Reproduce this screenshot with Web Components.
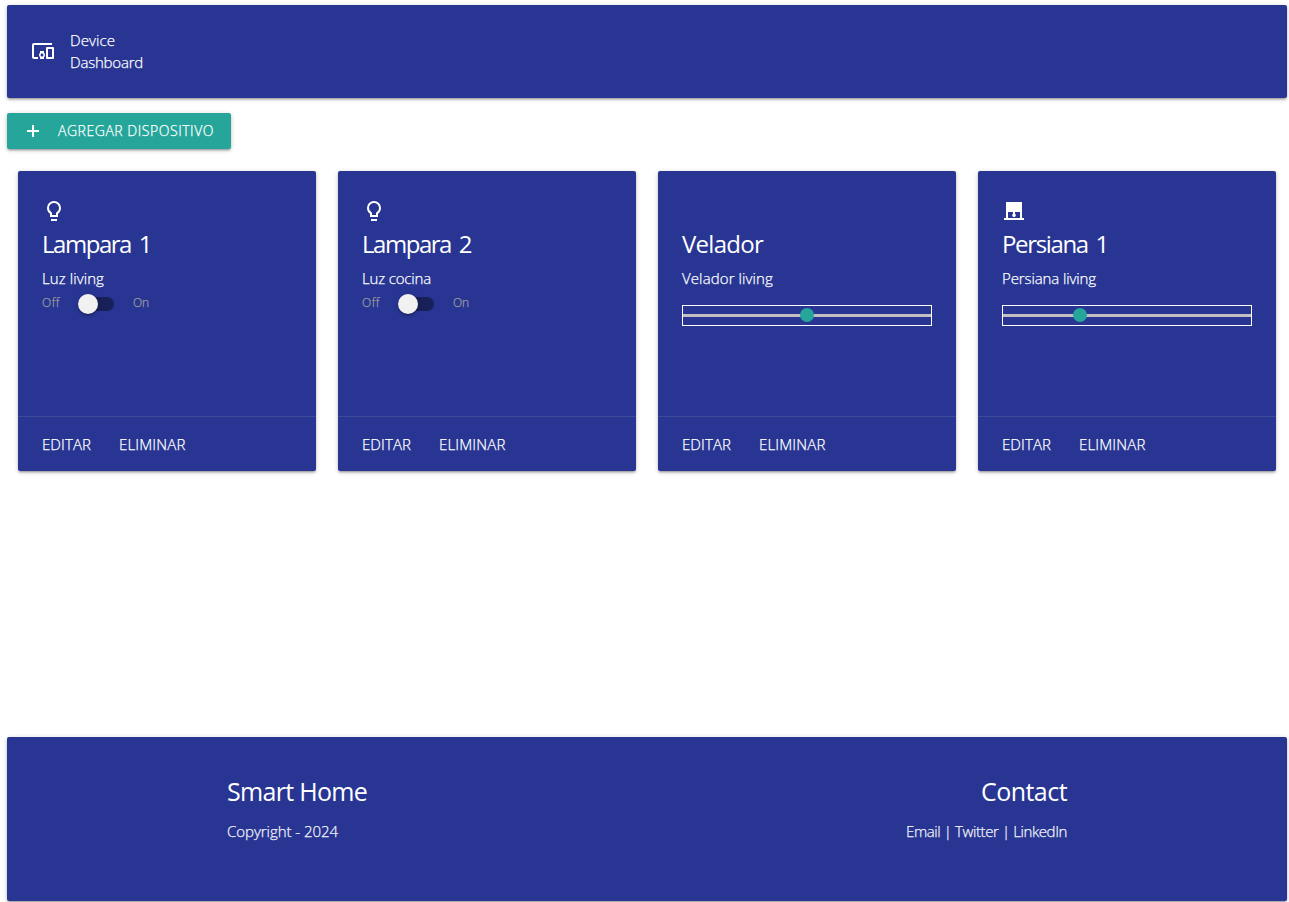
<!DOCTYPE html>
<html lang="es">
<head>
<meta charset="utf-8">
<title>Device Dashboard</title>
<style>
html,body{margin:0;background:#fff;height:100%}
body{font-family:"Open Sans","Noto Sans",sans-serif;font-size:15px;line-height:22px;color:#fff;overflow:hidden}
</style>
</head>
<body>
<smart-app></smart-app>
<script>
const SHADOW='0 2px 2px 0 rgba(0,0,0,.14),0 3px 1px -2px rgba(0,0,0,.12),0 1px 5px 0 rgba(0,0,0,.2)';
const LIGHT='font-weight:300;-webkit-text-stroke:.25px currentColor';
const define=(name,html,setup)=>customElements.define(name,class extends HTMLElement{
  constructor(){super();this.attachShadow({mode:'open'}).innerHTML=html;}
  connectedCallback(){if(setup)setup(this,this.shadowRoot);}
});

// A line of text tracked so that it fills the given width
define('fit-text',`<style>:host{display:block;white-space:pre}span{display:inline-block}</style><span><slot></slot></span>`,(el,root)=>{
  const span=root.querySelector('span'),target=+el.getAttribute('width');
  el.style.width=target+'px';
  const n=el.textContent.length;
  span.style.letterSpacing='0px';
  const w=span.getBoundingClientRect().width;
  span.style.letterSpacing=((target-w)/n).toFixed(3)+'px';
});

const ICONS={
  devices:'<path d="M3 6h18V4H3c-1.1 0-2 .9-2 2v12c0 1.1.9 2 2 2h4v-2H3V6zm10 6H9v1.78c-.61.55-1 1.33-1 2.22s.39 1.67 1 2.22V20h4v-1.78c.61-.55 1-1.34 1-2.22s-.39-1.67-1-2.22V12zm-2 5.5c-.83 0-1.5-.67-1.5-1.5s.67-1.5 1.5-1.5 1.5.67 1.5 1.5-.67 1.5-1.5 1.5zM22 8h-6c-.5 0-1 .5-1 1v10c0 .5.5 1 1 1h6c.5 0 1-.5 1-1V9c0-.5-.5-1-1-1zm-1 10h-4v-8h4v8z"/>',
  bulb:'<path d="M9 20h6v2H9zM12 2a7 7 0 0 0-7 7c0 2.38 1.19 4.47 3 5.74V18h8v-3.26c1.81-1.27 3-3.36 3-5.74a7 7 0 0 0-7-7zm2.85 11.1-.85.6V16h-4v-2.3l-.85-.6A4.997 4.997 0 0 1 7 9c0-2.76 2.24-5 5-5s5 2.24 5 5c0 1.63-.8 3.16-2.15 4.1z"/>',
  shade:'<path d="M20 19V3H4v16H2v2h20v-2h-2zM6 19v-6h5v1.8c-.4.3-.8.8-.8 1.4 0 1 .8 1.8 1.8 1.8s1.8-.8 1.8-1.8c0-.6-.3-1.1-.8-1.4V13h5v6H6z"/>',
  plus:'<path d="M18 13h-5v5h-2v-5H6v-2h5V6h2v5h5z"/>',
  none:''
};
define('md-icon',`<style>:host{display:block;width:24px;height:24px;flex:none}svg{display:block;width:100%;height:100%;fill:currentColor}</style><svg viewBox="0 0 24 24"></svg>`,(el,root)=>{
  root.querySelector('svg').innerHTML=ICONS[el.getAttribute('name')]||'';
});

define('app-header',`<style>
:host{display:flex;align-items:flex-start;box-sizing:border-box;height:93px;padding:24px 24px 0;gap:15px;background:#283593;border-radius:2px;box-shadow:${SHADOW};${LIGHT}}
md-icon{margin-top:10px}
</style><md-icon name="devices"></md-icon><div><slot></slot></div>`);

define('add-button',`<style>
:host{display:flex;align-items:center;box-sizing:border-box;width:224px;height:36px;padding-left:14px;gap:13px;background:#26a69a;border-radius:2px;box-shadow:${SHADOW};font-size:14px;${LIGHT}}
</style><md-icon name="plus"></md-icon><slot></slot>`);

define('toggle-switch',`<style>
:host{display:flex;align-items:center;height:20px;font-size:12px;line-height:18px;color:#9e9e9e;${LIGHT}}
fit-text{margin-top:-2px}
.lever{width:36px;height:14px;margin:0 19px 0 18px;border-radius:15px;background:#182058;display:flex;align-items:center}
.thumb{width:20px;height:20px;flex:none;border-radius:50%;background:#f1f1f1;box-shadow:0 3px 1px -2px rgba(0,0,0,.2),0 2px 2px 0 rgba(0,0,0,.14),0 1px 5px 0 rgba(0,0,0,.12)}
</style><fit-text width="18">Off</fit-text><div class="lever"><div class="thumb"></div></div><fit-text width="16">On</fit-text>`);

define('range-slider',`<style>
:host{display:grid;align-items:center;box-sizing:border-box;width:250px;height:21px;margin-top:11px;border:1px solid #fff}
.track,.row{grid-area:1/1}
.track{height:3px;background:#c2c0c2}
.row{display:flex;height:14px;margin-top:-1px}
.thumb{width:14px;height:14px;border-radius:50%;background:#26a69a;margin-left:var(--at)}
</style><div class="track"></div><div class="row"><div class="thumb"></div></div>`,(el)=>el.style.setProperty('--at',el.getAttribute('at')+'px'));

define('device-card',`<style>
:host{display:flex;flex-direction:column;width:298px;height:300px;background:#283593;border-radius:2px;box-shadow:${SHADOW}}
.body{flex:1;display:flex;flex-direction:column;padding:28px 24px 0}
.title{display:block;font-size:24px;line-height:36px;margin:3px 0 5px;word-spacing:3px}
.desc{display:block;margin-bottom:5px;${LIGHT}}
.actions{display:flex;gap:28px;box-sizing:border-box;height:55px;padding:16px 24px;border-top:1px solid rgba(160,160,160,.2);${LIGHT}}
</style><div class="body"><md-icon></md-icon><slot class="title" name="title"></slot><slot class="desc" name="desc"></slot><slot></slot></div>
<div class="actions"><fit-text width="49">EDITAR</fit-text><fit-text width="66.5">ELIMINAR</fit-text></div>`,(el,root)=>{
  const i=root.querySelector('md-icon');i.setAttribute('name',el.getAttribute('icon'));
  i.shadowRoot.querySelector('svg').innerHTML=ICONS[el.getAttribute('icon')];
});

define('app-footer',`<style>
:host{display:flex;justify-content:space-between;box-sizing:border-box;height:164px;padding:37px 220px 0;background:#283593;border-radius:2px;box-shadow:${SHADOW}}
.col{display:flex;flex-direction:column;gap:12px}
.right{align-items:flex-end}
.h{font-size:25px;line-height:34px}
.p{color:#f4f4fa;${LIGHT}}
</style><div class="col"><fit-text class="h" width="140">Smart Home</fit-text><fit-text class="p" width="111">Copyright - 2024</fit-text></div>
<div class="col right"><fit-text class="h" width="86">Contact</fit-text><fit-text class="p" width="161">Email | Twitter | LinkedIn</fit-text></div>`);

define('smart-app',`<style>
:host{display:flex;flex-direction:column;box-sizing:border-box;width:1287px;height:901px;padding:5px 0 0 7px}
add-button{margin-top:15px}
.cards{display:flex;gap:22px;margin:22px 11px 0}
app-footer{margin-top:auto}
</style>
<app-header><fit-text width="45">Device</fit-text><fit-text width="73">Dashboard</fit-text></app-header>
<add-button><fit-text width="156">AGREGAR DISPOSITIVO</fit-text></add-button>
<div class="cards">
<device-card icon="bulb"><fit-text slot="title" width="109">Lampara 1</fit-text><fit-text slot="desc" width="62">Luz living</fit-text><toggle-switch></toggle-switch></device-card>
<device-card icon="bulb"><fit-text slot="title" width="109">Lampara 2</fit-text><fit-text slot="desc" width="69">Luz cocina</fit-text><toggle-switch></toggle-switch></device-card>
<device-card icon="none"><fit-text slot="title" width="81">Velador</fit-text><fit-text slot="desc" width="91">Velador living</fit-text><range-slider at="117"></range-slider></device-card>
<device-card icon="shade"><fit-text slot="title" width="106">Persiana 1</fit-text><fit-text slot="desc" width="94">Persiana living</fit-text><range-slider at="70"></range-slider></device-card>
</div>
<app-footer></app-footer>`);
</script>
</body>
</html>
